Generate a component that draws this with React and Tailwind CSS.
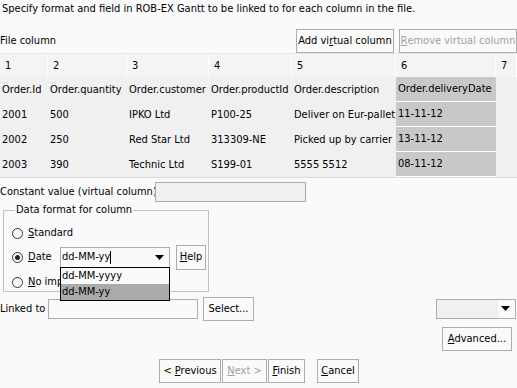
import React from 'react';

const cols = ['1', '2', '3', '4', '5', '6', '7'];
const widths = ['w-[48px]', 'w-[79px]', 'w-[82px]', 'w-[83px]', 'w-[104px]', 'w-[100px]', 'flex-1'];

const rows = [
    ['Order.Id', 'Order.quantity', 'Order.customer', 'Order.productId', 'Order.description', 'Order.deliveryDate', ''],
    ['2001', '500', 'IPKO Ltd', 'P100-25', 'Deliver on Eur-pallet', '11-11-12', ''],
    ['2002', '250', 'Red Star Ltd', '313309-NE', 'Picked up by carrier', '13-11-12', ''],
    ['2003', '390', 'Technic Ltd', 'S199-01', '5555 5512', '08-11-12', ''],
];

const Btn = ({ className = '', disabled, children }) => (
    <div
        className={`flex items-center justify-center border border-[#adadad] bg-[#fafafa] h-[24px] whitespace-nowrap ${disabled ? 'text-[#a0a0a0]' : 'text-black'} ${className}`}
    >
        {children}
    </div>
);

const Radio = ({ checked }) => (
    <span className="w-[11px] h-[11px] rounded-full border border-[#333] bg-[#fafafa] flex items-center justify-center">
        {checked && <span className="w-[5px] h-[5px] rounded-full bg-[#222]" />}
    </span>
);

const Arrow = () => (
    <svg width="9" height="5" viewBox="0 0 9 5">
        <polygon points="0,0 9,0 4.5,5" fill="#000" />
    </svg>
);

const App = () => {
    return (
        <div className="w-[517px] h-[388px] overflow-hidden bg-[#fafafa] text-black text-[11px] leading-[14px] font-['DejaVu_Sans_Condensed','DejaVu_Sans',sans-serif] font-stretch-condensed">
            <div className="h-[28px] pl-[2px] pt-[2px] whitespace-nowrap">
                Specify format and field in ROB-EX Gantt to be linked to for each column in the file.
            </div>

            <div className="h-[25px] flex items-center">
                <span>File column</span>
                <Btn className="ml-auto w-[98px]">
                    Add vi<span className="underline">r</span>tual column
                </Btn>
                <Btn disabled className="ml-[5px] w-[118px]">
                    <span className="underline">R</span>emove virtual column
                </Btn>
            </div>

            <div className="border-b border-[#dcdcdc] bg-[#f0f0f0]">
                <div className="flex h-[24px] bg-[#f4f4f4] border-t border-[#e6e6e6]">
                    {cols.map((c, i) => (
                        <div key={c} className={`${widths[i]} flex items-center pl-[5px] border-r border-white`}>
                            {c}
                        </div>
                    ))}
                </div>
                {rows.map((r, ri) => (
                    <div key={ri} className="flex h-[25px]">
                        {r.map((cell, ci) => (
                            <div
                                key={ci}
                                className={`${widths[ci]} flex items-center pl-[2px] whitespace-nowrap ${ci === 5 ? 'bg-[#c8c8c8] border-b border-white' : ''}`}
                            >
                                {cell}
                            </div>
                        ))}
                    </div>
                ))}
            </div>

            <div className="flex items-center mt-[3px] h-[21px]">
                <span className="w-[155px] whitespace-nowrap">Constant value (virtual column)</span>
                <div className="w-[151px] h-[20px] border border-[#adadad] bg-[#f0f0f0]" />
            </div>

            <fieldset className="mt-[1px] ml-[3px] w-[206px] h-[89px] border border-[#c3c3c3] pl-[8px]">
                <legend className="ml-[3px] px-[1px] whitespace-nowrap">Data format for column</legend>
                <div className="flex items-center gap-[5px] h-[22px] mt-[5px]">
                    <Radio />
                    <span><span className="underline">S</span>tandard</span>
                </div>
                <div className="flex items-center h-[24px] mt-[1px]">
                    <Radio checked />
                    <span className="ml-[5px] w-[32px]"><span className="underline">D</span>ate</span>
                    <div className="relative">
                        <div className="w-[110px] h-[21px] border border-[#adadad] bg-[#fafafa] flex items-center pl-[1px]">
                            <span>dd-MM-yy</span>
                            <span className="w-[1px] h-[13px] bg-black" />
                            <span className="ml-auto mr-[5px] flex"><Arrow /></span>
                        </div>
                        <div className="absolute left-0 top-[20px] w-[110px] border border-black bg-[#fafafa] z-10">
                            <div className="h-[16px] flex items-center pl-[1px]">dd-MM-yyyy</div>
                            <div className="h-[16px] flex items-center pl-[1px] bg-[#aaaaaa]">dd-MM-yy</div>
                        </div>
                    </div>
                    <Btn className="ml-[6px] w-[30px] h-[25px]">
                        <span className="underline">H</span>elp
                    </Btn>
                </div>
                <div className="flex items-center gap-[5px] h-[22px] mt-[2px]">
                    <Radio />
                    <span className="whitespace-nowrap"><span className="underline">N</span>o import</span>
                </div>
            </fieldset>

            <div className="flex items-center h-[25px] mt-[4px]">
                <span className="w-[48px] whitespace-nowrap">Linked to</span>
                <div className="w-[150px] h-[20px] border border-[#adadad] bg-[#fafafa]" />
                <Btn className="ml-[5px] w-[51px]">Select...</Btn>
                <div className="ml-auto mr-[1px] w-[80px] h-[20px] border border-[#adadad] bg-[#fafafa] flex items-center">
                    <div className="w-[61px] h-full bg-[#f0f0f0]" />
                    <span className="ml-auto mr-[5px] flex"><Arrow /></span>
                </div>
            </div>

            <div className="flex justify-end mt-[6px] pr-[5px]">
                <Btn className="w-[70px]">
                    <span><span className="underline">A</span>dvanced...</span>
                </Btn>
            </div>

            <div className="flex mt-[8px] pl-[159px]">
                <Btn className="w-[62px]">
                    <span>&lt; <span className="underline">P</span>revious</span>
                </Btn>
                <Btn disabled className="ml-[1px] w-[45px]">
                    <span><span className="underline">N</span>ext &gt;</span>
                </Btn>
                <Btn className="ml-[1px] w-[37px]">
                    <span><span className="underline">F</span>inish</span>
                </Btn>
                <Btn className="ml-[12px] w-[42px]">
                    <span><span className="underline">C</span>ancel</span>
                </Btn>
            </div>
        </div>
    );
};

export default App;
